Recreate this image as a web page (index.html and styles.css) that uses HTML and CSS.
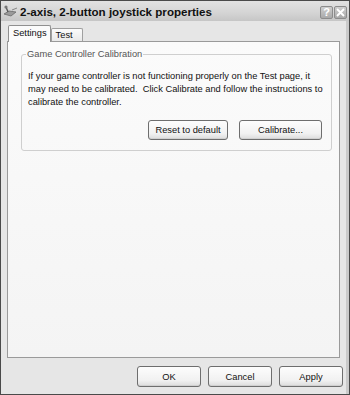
FILE: index.html
```html
<!DOCTYPE html>
<html lang="en">
  <head>
    <meta charset="UTF-8" />
    <meta name="viewport" content="width=device-width, initial-scale=1.0" />
    <title>2-axis, 2-button joystick properties</title>
    <link rel="stylesheet" href="styles.css">
  </head>
  <body>
    <div class="window">
      <div class="titlebar">
        <svg class="app-icon" width="15" height="12" viewBox="0 0 15 12">
          <path d="M1 9 L6 6 L13 7 L8 11 Z" fill="#9a9a9a" stroke="#6a6a6a" stroke-width="0.8" />
          <path d="M5 7 L3 2" stroke="#555" stroke-width="1.4" />
          <circle cx="3" cy="2" r="1.6" fill="#777" />
          <path d="M9 5 L14 3" stroke="#888" stroke-width="1" />
        </svg>
        <span class="title">2-axis, 2-button joystick properties</span>
        <div class="caption-buttons">
          <span class="caption-btn help">?</span>
          <span class="caption-btn close">
            <svg width="9" height="9" viewBox="0 0 9 9">
              <path d="M1 1 L8 8 M8 1 L1 8" stroke="#fff" stroke-width="1.8" />
            </svg>
          </span>
        </div>
      </div>

      <div class="content">
        <div class="tabs">
          <span class="tab active">Settings</span>
          <span class="tab">Test</span>
        </div>

        <div class="page">
          <fieldset class="group">
            <legend>Game Controller Calibration</legend>
            <p>
              If your game controller is not functioning properly on the Test page, it
              may need to be calibrated.&nbsp; Click Calibrate and follow the instructions to
              calibrate the controller.
            </p>
            <div class="group-buttons">
              <button class="btn reset">Reset to default</button>
              <button class="btn calibrate">Calibrate...</button>
            </div>
          </fieldset>
        </div>

        <div class="footer">
          <button class="btn dialog-btn">OK</button>
          <button class="btn dialog-btn">Cancel</button>
          <button class="btn dialog-btn">Apply</button>
        </div>
      </div>
    </div>
  </body>
</html>
```

FILE: styles.css
```css
body {
  margin: 0;
  padding: 0;
  font-family: "Liberation Sans", Arial, sans-serif;
  background-color: #e6e6e6;
}

.window {
  width: 350px;
  height: 395px;
  box-sizing: border-box;
  border: 1px solid #4a4a4a;
  display: flex;
  flex-direction: column;
  background-color: #e6e6e6;
}

.titlebar {
  height: 20px;
  flex-shrink: 0;
  display: flex;
  align-items: center;
  padding: 0 2px 0 2px;
  background: linear-gradient(#e2e2e2, #d4d4d4 60%, #c6c6c6);
}

.app-icon {
  margin-right: 2px;
}

.title {
  font-weight: bold;
  font-size: 11.6px;
  color: #111;
  margin-top: 1px;
}

.caption-buttons {
  margin-left: auto;
  display: flex;
  gap: 1px;
}

.caption-btn {
  width: 13px;
  height: 13px;
  box-sizing: border-box;
  border: 1px solid #8c8c8c;
  border-radius: 2px;
  display: flex;
  align-items: center;
  justify-content: center;
  background: linear-gradient(#cfcfcf, #a9a9a9);
  color: #fff;
  font-weight: bold;
  font-size: 11px;
  margin-top: 2px;
}

.content {
  flex: 1;
  display: flex;
  flex-direction: column;
  padding: 4px 3px 4px 6px;
  border-right: 3px solid #cacaca;
}

.tabs {
  display: flex;
  align-items: flex-end;
  height: 16px;
  position: relative;
  z-index: 1;
  margin-left: 1px;
}

.tab {
  font-size: 9.3px;
  color: #111;
  height: 12px;
  line-height: 12px;
  padding: 0 9px 0 4px;
  border: 1px solid #a0a0a0;
  border-bottom: 0;
  border-radius: 2px 2px 0 0;
  background: linear-gradient(#fbfbfb, #e9e9e9);
}

.tab.active {
  height: 16px;
  line-height: 15px;
  padding: 0 3px 0 4px;
  border-color: #909090;
  background: #fbfbfb;
  margin-bottom: -1px;
}

.page {
  flex: 1;
  border: 1px solid #9a9a9a;
  background: linear-gradient(#fbfbfb, #f4f4f4);
  margin-right: 3px;
}

.group {
  margin: 7px 7px 0 13px;
  padding: 0 9px 10px 6px;
  border: 1px solid #cfcfcf;
  border-radius: 3px;
}

.group legend {
  font-size: 9.3px;
  color: #555;
  padding: 0 1px;
  margin-left: -2px;
  line-height: 11px;
}

.group p {
  margin: 10px -8px 0 0;
  font-size: 9.3px;
  line-height: 13px;
  color: #111;
}

.group-buttons {
  display: flex;
  justify-content: flex-end;
  gap: 11px;
  margin-top: 11px;
}

.btn {
  font-family: "Liberation Sans", Arial, sans-serif;
  font-size: 9.3px;
  color: #111;
  height: 20px;
  padding: 0;
  border: 1px solid #6e6e6e;
  border-radius: 3px;
  background: linear-gradient(#fdfdfd, #f1f1f1 70%, #dcdcdc);
  box-shadow: inset 0 -1px 0 #d0d0d0;
}

.reset {
  width: 80px;
}

.calibrate {
  width: 83px;
}

.footer {
  display: flex;
  justify-content: flex-end;
  gap: 7px;
  margin-top: 8px;
  margin-bottom: 3px;
}

.dialog-btn {
  width: 64px;
  height: 21px;
}
```
